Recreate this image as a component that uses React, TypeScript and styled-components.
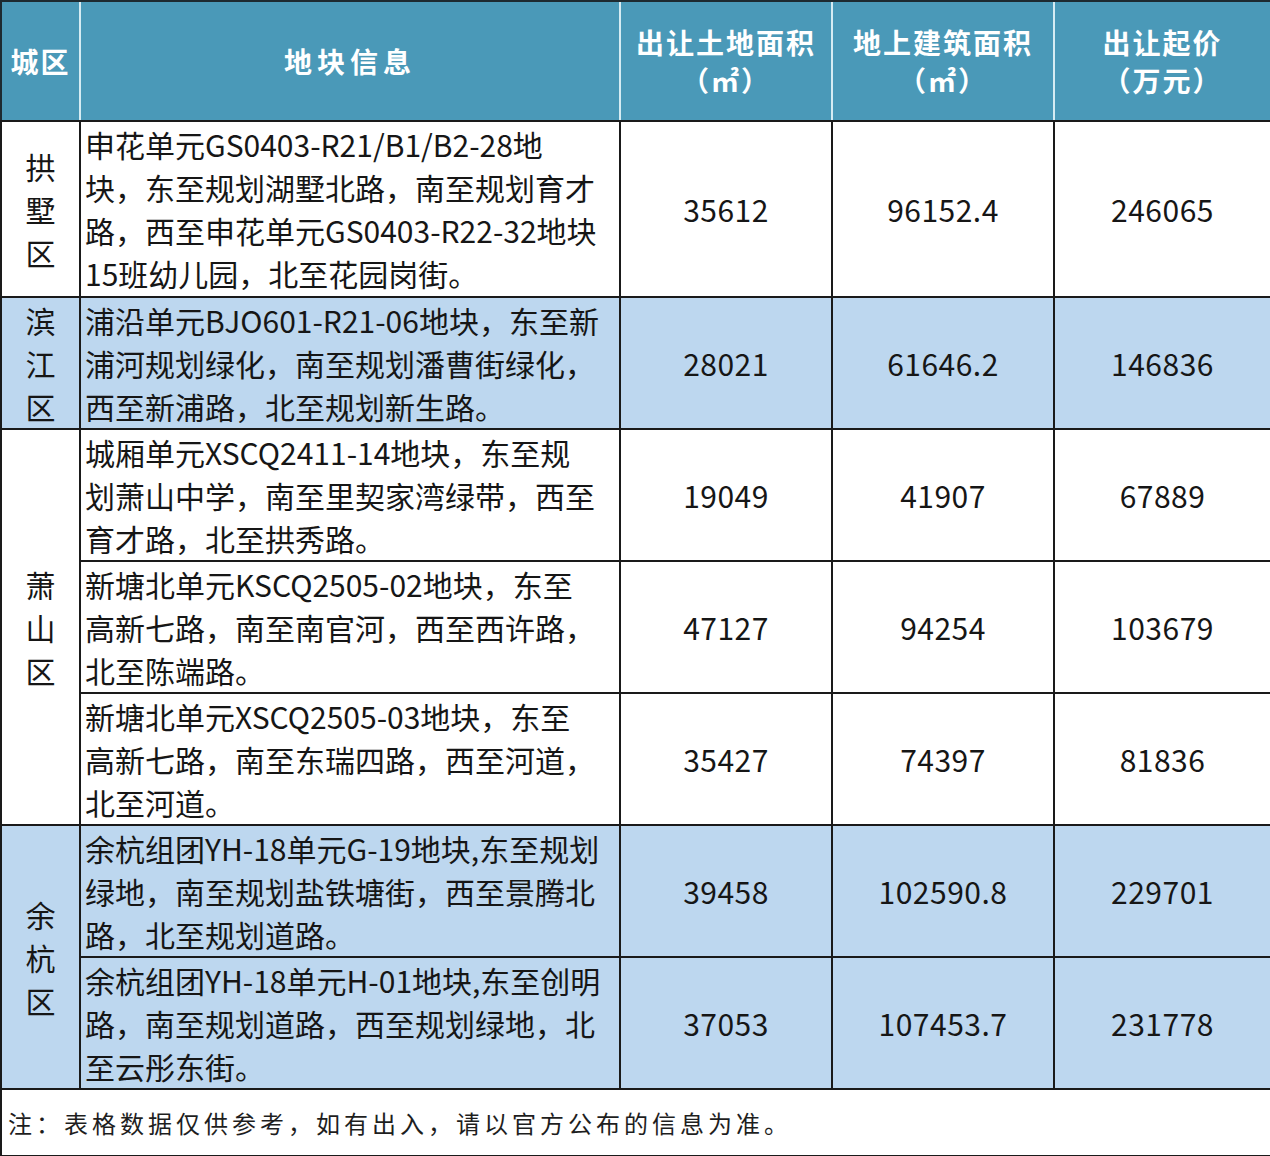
import React from 'react';
import styled, { createGlobalStyle } from 'styled-components';

const GlobalStyle = createGlobalStyle`
  html, body { margin: 0; padding: 0; background: #fff; }
  body { font-family: "Noto Sans CJK SC", "Noto Sans", sans-serif; }
`;

const Table = styled.table`
  width: 1270px;
  border-collapse: collapse;
  table-layout: fixed;
  color: #161616;
`;

const HeadRow = styled.tr`
  height: 120px;
  background: #4a99b8;
`;

const HeadCell = styled.th<{ $spaced?: boolean }>`
  padding: 0;
  color: #fff;
  font-size: 28px;
  font-weight: 700;
  line-height: 38px;
  letter-spacing: ${(p) => (p.$spaced ? '5px' : '2px')};
  text-align: center;
  vertical-align: middle;
  border-top: 2px solid #1d2a30;
  border-bottom: 2px solid #1a1a1a;
  border-left: 2px solid #d6ecf3;
  &:first-child { border-left: 2px solid #1d2a30; }
  &:last-child { border-right: 2px solid #1d2a30; }
`;

const HeadLine = styled.div`
  white-space: nowrap;
`;

const BodyRow = styled.tr<{ $tall?: boolean; $blue?: boolean }>`
  height: ${(p) => (p.$tall ? '176px' : '132px')};
  background: ${(p) => (p.$blue ? '#bdd7ef' : '#fff')};
`;

const cellBorder = `
  border: 2px solid #1a1a1a;
`;

const DistrictCell = styled.td`
  ${cellBorder}
  padding: 0;
  font-size: 30px;
  line-height: 43px;
  text-align: center;
  vertical-align: middle;
`;

const InfoCell = styled.td`
  ${cellBorder}
  padding: 0 0 0 4px;
  font-size: 30px;
  line-height: 43px;
  vertical-align: middle;
  overflow: hidden;
`;

const Line = styled.div`
  white-space: nowrap;
`;

const NumCell = styled.td`
  ${cellBorder}
  padding: 0;
  font-size: 30px;
  letter-spacing: 0.5px;
  text-align: center;
  vertical-align: middle;
`;

const NoteRow = styled.tr`
  height: 67px;
`;

const NoteCell = styled.td`
  ${cellBorder}
  padding: 0 0 0 6px;
  font-size: 24px;
  letter-spacing: 4px;
  color: #1e1e1e;
  vertical-align: middle;
`;

type Plot = {
  lines: string[];
  land: string;
  build: string;
  price: string;
};

type District = {
  name: string;
  blue: boolean;
  plots: Plot[];
};

const HEADERS: { lines: string[]; spaced?: boolean }[] = [
  { lines: ['城区'] },
  { lines: ['地块信息'], spaced: true },
  { lines: ['出让土地面积', '（㎡）'] },
  { lines: ['地上建筑面积', '（㎡）'] },
  { lines: ['出让起价', '（万元）'] },
];

const DATA: District[] = [
  {
    name: '拱墅区',
    blue: false,
    plots: [
      {
        lines: [
          '申花单元GS0403-R21/B1/B2-28地',
          '块，东至规划湖墅北路，南至规划育才',
          '路，西至申花单元GS0403-R22-32地块',
          '15班幼儿园，北至花园岗街。',
        ],
        land: '35612',
        build: '96152.4',
        price: '246065',
      },
    ],
  },
  {
    name: '滨江区',
    blue: true,
    plots: [
      {
        lines: [
          '浦沿单元BJO601-R21-06地块，东至新',
          '浦河规划绿化，南至规划潘曹街绿化，',
          '西至新浦路，北至规划新生路。',
        ],
        land: '28021',
        build: '61646.2',
        price: '146836',
      },
    ],
  },
  {
    name: '萧山区',
    blue: false,
    plots: [
      {
        lines: [
          '城厢单元XSCQ2411-14地块，东至规',
          '划萧山中学，南至里契家湾绿带，西至',
          '育才路，北至拱秀路。',
        ],
        land: '19049',
        build: '41907',
        price: '67889',
      },
      {
        lines: [
          '新塘北单元KSCQ2505-02地块，东至',
          '高新七路，南至南官河，西至西许路，',
          '北至陈端路。',
        ],
        land: '47127',
        build: '94254',
        price: '103679',
      },
      {
        lines: [
          '新塘北单元XSCQ2505-03地块，东至',
          '高新七路，南至东瑞四路，西至河道，',
          '北至河道。',
        ],
        land: '35427',
        build: '74397',
        price: '81836',
      },
    ],
  },
  {
    name: '余杭区',
    blue: true,
    plots: [
      {
        lines: [
          '余杭组团YH-18单元G-19地块,东至规划',
          '绿地，南至规划盐铁塘街，西至景腾北',
          '路，北至规划道路。',
        ],
        land: '39458',
        build: '102590.8',
        price: '229701',
      },
      {
        lines: [
          '余杭组团YH-18单元H-01地块,东至创明',
          '路，南至规划道路，西至规划绿地，北',
          '至云彤东街。',
        ],
        land: '37053',
        build: '107453.7',
        price: '231778',
      },
    ],
  },
];

export default function App() {
  return (
    <>
      <GlobalStyle />
      <Table>
        <colgroup>
          <col style={{ width: 79 }} />
          <col style={{ width: 540 }} />
          <col style={{ width: 212 }} />
          <col style={{ width: 222 }} />
          <col style={{ width: 217 }} />
        </colgroup>
        <thead>
          <HeadRow>
            {HEADERS.map((h, hi) => (
              <HeadCell key={hi} $spaced={h.spaced}>
                {h.lines.map((l) => (
                  <HeadLine key={l}>{l}</HeadLine>
                ))}
              </HeadCell>
            ))}
          </HeadRow>
        </thead>
        <tbody>
          {DATA.map((d, di) =>
            d.plots.map((p, pi) => (
              <BodyRow key={`${di}-${pi}`} $blue={d.blue} $tall={di === 0}>
                {pi === 0 && (
                  <DistrictCell rowSpan={d.plots.length}>
                    {d.name.split('').map((c) => (
                      <div key={c}>{c}</div>
                    ))}
                  </DistrictCell>
                )}
                <InfoCell>
                  {p.lines.map((l, li) => (
                    <Line key={li}>{l}</Line>
                  ))}
                </InfoCell>
                <NumCell>{p.land}</NumCell>
                <NumCell>{p.build}</NumCell>
                <NumCell>{p.price}</NumCell>
              </BodyRow>
            ))
          )}
          <NoteRow>
            <NoteCell colSpan={5}>注：表格数据仅供参考，如有出入，请以官方公布的信息为准。</NoteCell>
          </NoteRow>
        </tbody>
      </Table>
    </>
  );
}
